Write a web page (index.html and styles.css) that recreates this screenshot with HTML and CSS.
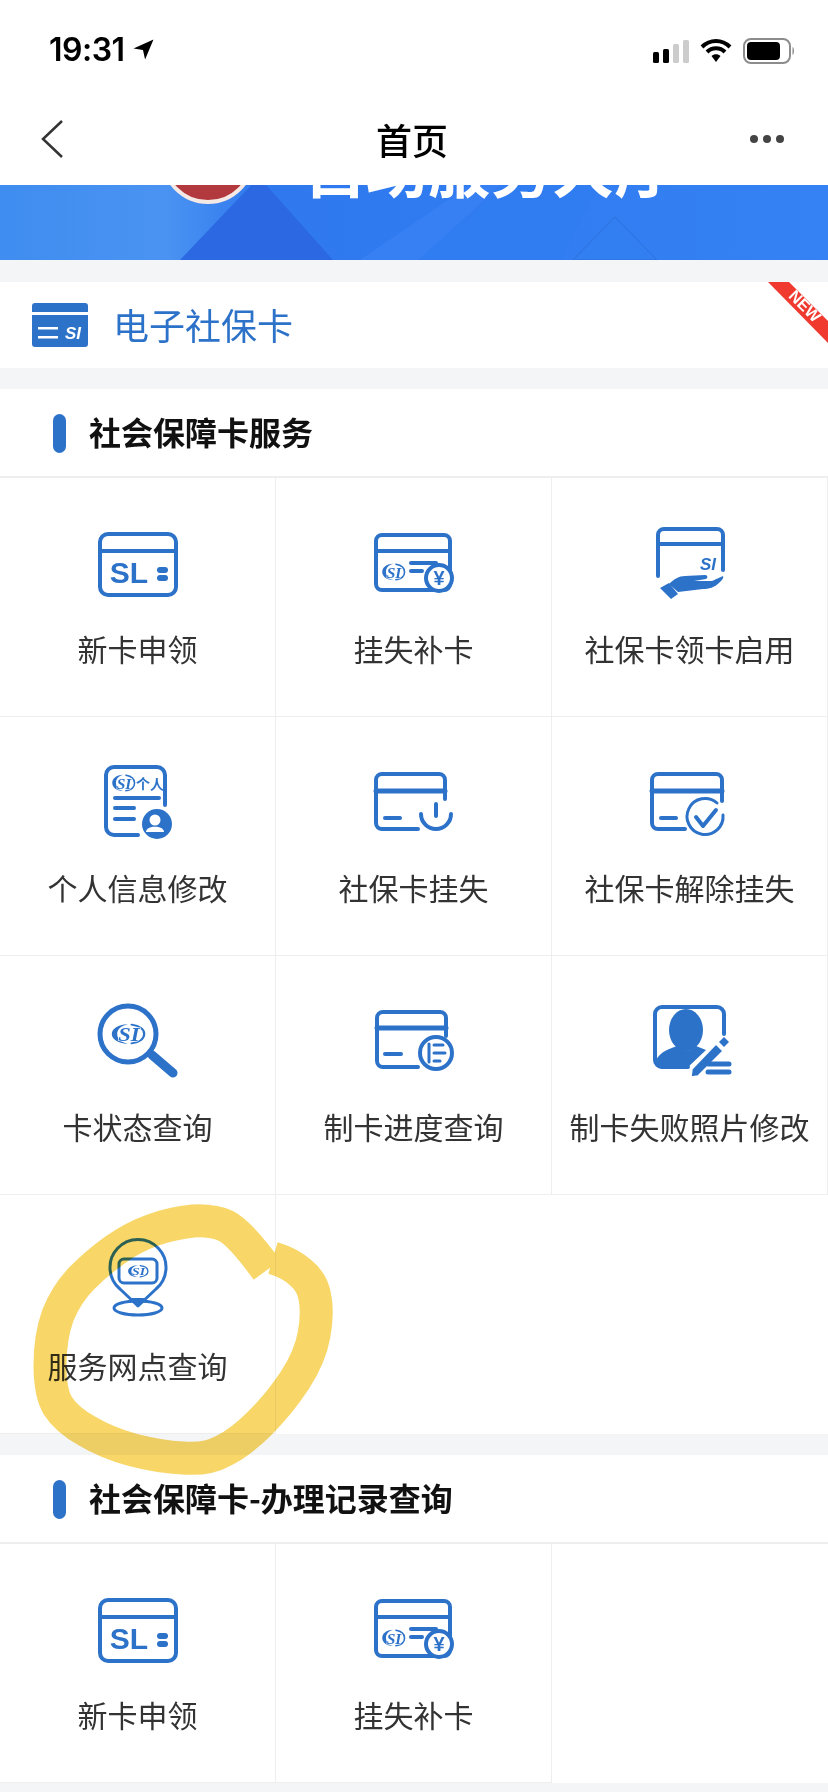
FILE: index.html
```html
<!DOCTYPE html>
<html lang="zh-CN">
<head>
  <meta charset="UTF-8" />
  <title>首页</title>
  <link rel="stylesheet" href="styles.css">
</head>
<body>

<header class="top">
  <div class="status-bar">
    <div class="status-time">
      <span>19:31</span>
      <svg class="loc-arrow" width="21" height="21" viewBox="0 0 20 20"><path d="M19.5 .5 L.5 9 L9.5 10.500 L11.5 19.5 Z"/></svg>
    </div>
    <div class="status-icons">
      <svg width="36" height="23" viewBox="0 0 36 23">
        <rect x="0" y="12" width="6" height="11" rx="1.5" fill="#000"/>
        <rect x="10" y="9" width="6" height="14" rx="1.5" fill="#000"/>
        <rect x="20" y="4" width="6" height="19" rx="1.5" fill="#ccc"/>
        <rect x="30" y="0" width="6" height="23" rx="1.5" fill="#ccc"/>
      </svg>
      <svg width="32" height="24" viewBox="0 0 32 24">
        <path d="M2 8 C10 0 22 0 30 8" fill="none" stroke="#000" stroke-width="4"/>
        <path d="M7 13 C12 8 20 8 25 13" fill="none" stroke="#000" stroke-width="4"/>
        <path d="M11.5 17 C14 14.5 18 14.5 20.500 17 L16 23 Z" fill="#000"/>
      </svg>
      <svg width="52" height="26" viewBox="0 0 52 26">
        <rect x="1" y="1" width="46" height="24" rx="7" fill="#fff" stroke="#8c8c8c" stroke-width="2"/>
        <rect x="4" y="4" width="33" height="18" rx="4" fill="#000"/>
        <path d="M49.500 9 C51.500 10 51.500 16 49.500 17 Z" fill="#8c8c8c"/>
      </svg>
    </div>
  </div>
  <nav class="nav-bar">
    <svg class="nav-back" width="24" height="38" viewBox="0 0 24 38"><path d="M22 1 L3 19 L22 37"/></svg>
    <h1 class="nav-title">首页</h1>
    <div class="nav-more"><i></i><i></i><i></i></div>
  </nav>
</header>

<svg class="banner" viewBox="0 0 828 75" preserveAspectRatio="none">
  <defs>
    <linearGradient id="bannerBg" x1="0" y1="0" x2="1" y2="0">
      <stop offset="0" stop-color="#3f8df0"/>
      <stop offset=".2" stop-color="#4a93f2"/>
      <stop offset=".32" stop-color="#2f78ee"/>
      <stop offset="1" stop-color="#3482f4"/>
    </linearGradient>
  </defs>
  <rect width="828" height="75" fill="url(#bannerBg)"/>
  <path d="M259 -8 L333 75 L180 75 Z" fill="#2b68e2"/>
  <path d="M470 0 L360 75 L420 75 L500 0 Z" fill="#3680f3"/>
  <path d="M505 0 L418 75 L560 75 L600 0 Z" fill="#307cf1"/>
  <path d="M615 32 L657 75 L573 75 Z" fill="#327ff2" stroke="#2d70dc"/>
  <circle cx="208" cy="-28" r="45" fill="#b23a3e" stroke="#f4e9e4" stroke-width="4"/>
  <text x="304" y="8" class="banner-text">自助服务大厅</text>
</svg>

<section class="ecard">
  <svg class="ecard-icon" width="56" height="44" viewBox="0 0 56 44">
    <path d="M3 0 H53 A3 3 0 0 1 56 3 V9 H0 V3 A3 3 0 0 1 3 0 Z" fill="#2d72c9"/>
    <path d="M0 12 H56 V41 A3 3 0 0 1 53 44 H3 A3 3 0 0 1 0 41 Z" fill="#2d72c9"/>
    <rect x="6" y="24" width="20" height="2.500" fill="#fff"/>
    <rect x="6" y="33" width="20" height="2.500" fill="#fff"/>
    <text x="41" y="36" text-anchor="middle" class="ecard-si">SI</text>
  </svg>
  <span class="ecard-name">电子社保卡</span>
  <svg class="new-ribbon" width="60" height="62" viewBox="0 0 60 62">
    <path d="M0 0 H21 L60 39 V61 Z" fill="#f03a30"/>
    <text x="33" y="28" text-anchor="middle" transform="rotate(45 33 28)" class="new-text">NEW</text>
  </svg>
</section>

<section class="panel">
  <h2 class="panel-head">社会保障卡服务</h2>
  <div class="service-grid">
    <a class="service">
      <svg class="icon" viewBox="0 0 96 96">
        <rect x="10" y="18" width="76" height="61" rx="8"/>
        <line x1="10" y1="35" x2="86" y2="35"/>
        <text x="39" y="67" text-anchor="middle" class="sl-mark">SL</text>
        <line x1="70" y1="54" x2="75" y2="54" class="dot"/>
        <line x1="70" y1="62" x2="75" y2="62" class="dot"/>
      </svg>
      <span>新卡申领</span>
    </a>
    <a class="service">
      <svg class="icon" viewBox="0 0 96 96">
        <rect x="10" y="19" width="74" height="55" rx="6"/>
        <line x1="10" y1="35" x2="84" y2="35"/>
        <g transform="translate(15 46) scale(.62)">
          <path class="solid" d="M20 3 C8 3 2 10 2 16 C2 22 8 29 20 29 C12 27 8 22 8 16 C8 10 12 5 20 3 Z"/>
          <path class="arc" d="M24 3.500 C33 5 38 10 38 16 C38 22 33 27 24 28.500"/>
          <text x="21" y="25" text-anchor="middle" class="si-mark">SI</text>
        </g>
        <line x1="45" y1="47" x2="70" y2="47"/>
        <line x1="45" y1="55" x2="56" y2="55"/>
        <circle cx="73" cy="62" r="13" class="cover"/>
        <text x="73" y="69" text-anchor="middle" class="yen">¥</text>
      </svg>
      <span>挂失补卡</span>
    </a>
    <a class="service">
      <svg class="icon" viewBox="0 0 96 96">
        <path d="M16 60 V19 A6 6 0 0 1 22 13 H75 A6 6 0 0 1 81 19 V54"/>
        <line x1="16" y1="28" x2="81" y2="28"/>
        <text x="66" y="54" text-anchor="middle" class="si-text">SI</text>
        <path class="solid" d="M27 68 C32 63 37 60 43 60 L63 59 C66 59 66 62 64 63 L52 65 L70 65 L81 60 C82 62 80 64 78 66 C72 72 67 73 61 73 L36 76 Z"/>
        <path class="solid" d="M18 72 L27 67 L36 78 L29 83 Z"/>
      </svg>
      <span>社保卡领卡启用</span>
    </a>

    <a class="service">
      <svg class="icon" viewBox="0 0 96 96">
        <path d="M48 80 H24 A8 8 0 0 1 16 72 V20 A8 8 0 0 1 24 12 H67 A8 8 0 0 1 75 20 V50"/>
        <g transform="translate(21 18) scale(.62)">
          <path class="solid" d="M20 3 C8 3 2 10 2 16 C2 22 8 29 20 29 C12 27 8 22 8 16 C8 10 12 5 20 3 Z"/>
          <path class="arc" d="M24 3.500 C33 5 38 10 38 16 C38 22 33 27 24 28.500"/>
          <text x="21" y="25" text-anchor="middle" class="si-mark">SI</text>
        </g>
        <text x="60" y="34" text-anchor="middle" class="mini-cn">个人</text>
        <line x1="25" y1="43" x2="69" y2="43"/>
        <line x1="25" y1="53" x2="44" y2="53"/>
        <line x1="25" y1="64" x2="44" y2="64"/>
        <circle cx="67" cy="69" r="15" class="solid"/>
        <circle cx="65" cy="65" r="5.500" class="knock"/>
        <path d="M56 77 C56 70 74 70 74 77 Z" class="knock"/>
      </svg>
      <span>个人信息修改</span>
    </a>
    <a class="service">
      <svg class="icon" viewBox="0 0 96 96">
        <path d="M52 74 H16 A6 6 0 0 1 10 68 V25 A6 6 0 0 1 16 19 H73 A6 6 0 0 1 79 25 V44"/>
        <line x1="10" y1="36" x2="79" y2="36" class="thick"/>
        <line x1="19" y1="63" x2="34" y2="63"/>
        <path d="M55 59 A15 15 0 0 0 85 59"/>
        <line x1="70" y1="49" x2="70" y2="61"/>
      </svg>
      <span>社保卡挂失</span>
    </a>
    <a class="service">
      <svg class="icon" viewBox="0 0 96 96">
        <path d="M43 74 H16 A6 6 0 0 1 10 68 V25 A6 6 0 0 1 16 19 H74 A6 6 0 0 1 80 25 V46"/>
        <line x1="10" y1="36" x2="80" y2="36" class="thick"/>
        <line x1="19" y1="63" x2="34" y2="63"/>
        <path d="M75 48 A18 18 0 1 0 81 60" class="thin"/>
        <path d="M54 62 L61 71 L74 55"/>
      </svg>
      <span>社保卡解除挂失</span>
    </a>

    <a class="service">
      <svg class="icon" viewBox="0 0 96 96">
        <circle cx="38" cy="40" r="28" class="ring"/>
        <line x1="62" y1="61" x2="83" y2="79" class="handle"/>
        <g transform="translate(20 28) scale(.9 .75)">
          <path class="solid" d="M20 3 C8 3 2 10 2 16 C2 22 8 29 20 29 C12 27 8 22 8 16 C8 10 12 5 20 3 Z"/>
          <path class="arc" d="M24 3.500 C33 5 38 10 38 16 C38 22 33 27 24 28.500"/>
          <text x="21" y="25" text-anchor="middle" class="si-mark">SI</text>
        </g>
      </svg>
      <span>卡状态查询</span>
    </a>
    <a class="service">
      <svg class="icon" viewBox="0 0 96 96">
        <path d="M52 73 H17 A6 6 0 0 1 11 67 V24 A6 6 0 0 1 17 18 H74 A6 6 0 0 1 80 24 V42"/>
        <line x1="11" y1="34" x2="80" y2="34" class="thick"/>
        <line x1="19" y1="60" x2="35" y2="60"/>
        <circle cx="70" cy="59" r="16"/>
        <line x1="63" y1="50" x2="63" y2="68" class="thin"/>
        <line x1="68" y1="51" x2="77" y2="51" class="thin"/>
        <line x1="68" y1="59" x2="79" y2="59" class="thin"/>
        <line x1="68" y1="67" x2="74" y2="67" class="thin"/>
      </svg>
      <span>制卡进度查询</span>
    </a>
    <a class="service">
      <svg class="icon" viewBox="0 0 96 96">
        <path d="M46 73 H20 A7 7 0 0 1 13 66 V20 A7 7 0 0 1 20 13 H75 A7 7 0 0 1 82 20 V40"/>
        <ellipse cx="44" cy="36" rx="17" ry="21" class="solid"/>
        <path class="solid" d="M14 72 V66 C18 58 28 54 36 52 C42 58 48 58 54 52 L64 56 L44 75 H20 Z"/>
        <path class="pencil" d="M74 50 L81 57 L56 82 L49 83 L50 75 Z"/>
        <path class="solid" d="M82 43 L87 48 L82 53 L77 48 Z"/>
        <line x1="66" y1="70" x2="87" y2="70" class="thick"/>
        <line x1="66" y1="78" x2="87" y2="78" class="thick"/>
      </svg>
      <span>制卡失败照片修改</span>
    </a>

    <a class="service">
      <svg class="icon" viewBox="0 0 96 96">
        <path d="M48 73 L30 56 A28 28 0 1 1 66 56 Z" class="thin"/>
        <ellipse cx="48" cy="75" rx="24" ry="7" class="thin"/>
        <path d="M48 72 L41 65 H55 Z" class="solid"/>
        <rect x="29" y="26" width="38" height="24" rx="5" class="thin"/>
        <g transform="translate(37 31) scale(.55 .45)">
          <path class="solid" d="M20 3 C8 3 2 10 2 16 C2 22 8 29 20 29 C12 27 8 22 8 16 C8 10 12 5 20 3 Z"/>
          <path class="arc" d="M24 3.500 C33 5 38 10 38 16 C38 22 33 27 24 28.500"/>
          <text x="21" y="25" text-anchor="middle" class="si-mark">SI</text>
        </g>
      </svg>
      <span>服务网点查询</span>
    </a>
  </div>
</section>

<section class="panel">
  <h2 class="panel-head">社会保障卡-办理记录查询</h2>
  <div class="service-grid">
    <a class="service">
      <svg class="icon" viewBox="0 0 96 96">
        <rect x="10" y="18" width="76" height="61" rx="8"/>
        <line x1="10" y1="35" x2="86" y2="35"/>
        <text x="39" y="67" text-anchor="middle" class="sl-mark">SL</text>
        <line x1="70" y1="54" x2="75" y2="54" class="dot"/>
        <line x1="70" y1="62" x2="75" y2="62" class="dot"/>
      </svg>
      <span>新卡申领</span>
    </a>
    <a class="service">
      <svg class="icon" viewBox="0 0 96 96">
        <rect x="10" y="19" width="74" height="55" rx="6"/>
        <line x1="10" y1="35" x2="84" y2="35"/>
        <g transform="translate(15 46) scale(.62)">
          <path class="solid" d="M20 3 C8 3 2 10 2 16 C2 22 8 29 20 29 C12 27 8 22 8 16 C8 10 12 5 20 3 Z"/>
          <path class="arc" d="M24 3.500 C33 5 38 10 38 16 C38 22 33 27 24 28.500"/>
          <text x="21" y="25" text-anchor="middle" class="si-mark">SI</text>
        </g>
        <line x1="45" y1="47" x2="70" y2="47"/>
        <line x1="45" y1="55" x2="56" y2="55"/>
        <circle cx="73" cy="62" r="13" class="cover"/>
        <text x="73" y="69" text-anchor="middle" class="yen">¥</text>
      </svg>
      <span>挂失补卡</span>
    </a>
  </div>
</section>

<!-- marker scribble drawn on the screenshot -->
<svg class="scribble" width="828" height="1792" viewBox="0 0 828 1792">
  <path d="M267 1270 Q240 1233 226 1226 Q213 1220 193 1221 Q173 1223 153 1230 Q133 1237 115 1250 Q97 1263 82 1278 Q67 1293 58 1315 Q50 1337 50 1365 Q50 1393 58 1406 Q67 1420 87 1431 Q107 1443 133 1450 Q160 1457 183 1458 Q207 1460 223 1451 Q240 1443 260 1423 Q280 1403 295 1380 Q310 1357 314 1335 Q318 1313 315 1298 Q313 1283 301 1273 Q290 1263 273 1258"/>
</svg>

</body>
</html>
```

FILE: styles.css
```css
* { box-sizing: border-box; }

html, body {
  margin: 0;
  padding: 0;
}

body {
  position: relative;
  width: 828px;
  height: 1792px;
  overflow: hidden;
  background: #f4f5f6;
  font-family: "Noto Sans CJK SC", "Noto Sans", sans-serif;
  color: #333;
}

.top { background: #fff; }

.status-bar {
  height: 98px;
  padding: 0 33px 0 49px;
  display: flex;
  align-items: center;
  justify-content: space-between;
}

.status-time {
  display: flex;
  align-items: center;
  gap: 8px;
  font-family: Inter, sans-serif;
  font-size: 32px;
  font-weight: 600;
  letter-spacing: -.5px;
  color: #000;
}

.loc-arrow { fill: #000; }

.status-icons {
  padding-top: 4px;
  display: flex;
  align-items: center;
  gap: 11px;
}

.nav-bar {
  height: 87px;
  padding: 0 44px 5px 40px;
  display: grid;
  grid-template-columns: 1fr auto 1fr;
  align-items: center;
}

.nav-back {
  fill: none;
  stroke: #333;
  stroke-width: 2.5;
}

.nav-title {
  margin: 0;
  font-size: 36px;
  font-weight: 500;
  color: #000;
}

.nav-more {
  justify-self: end;
  display: flex;
  gap: 5px;
}

.nav-more i {
  width: 8px;
  height: 8px;
  border-radius: 50%;
  background: #444;
}

.banner {
  display: block;
  width: 828px;
  height: 75px;
}

.banner-text {
  font-size: 62px;
  font-weight: 700;
  fill: #fff;
}

.ecard {
  position: relative;
  height: 86px;
  margin-top: 22px;
  padding: 0 0 3px 32px;
  display: flex;
  align-items: center;
  gap: 25px;
  background: #fff;
}

.ecard-icon { margin-top: 3px; }

.ecard-si {
  font-family: "Liberation Sans", sans-serif;
  font-size: 17px;
  font-weight: 700;
  font-style: italic;
  fill: #fff;
}

.ecard-name {
  font-size: 36px;
  color: #2d72c9;
}

.new-ribbon {
  position: absolute;
  top: 0;
  right: 0;
}

.new-text {
  font-family: "Liberation Sans", sans-serif;
  font-size: 16px;
  font-weight: 700;
  fill: #fff;
}

.panel {
  margin-top: 21px;
  background: #fff;
}

.panel-head {
  position: relative;
  height: 89px;
  margin: 0;
  padding: 0 0 4px 89px;
  display: flex;
  align-items: center;
  font-size: 32px;
  font-weight: 700;
  color: #111;
  border-bottom: 2px solid #eee;
}

.panel-head::before {
  content: "";
  position: absolute;
  left: 53px;
  top: 25px;
  width: 13px;
  height: 39px;
  border-radius: 7px;
  background: #2d72c9;
}

.service-grid {
  display: grid;
  grid-template-columns: repeat(3, 276px);
  grid-auto-rows: 239px;
}

.service {
  padding-top: 38px;
  display: flex;
  flex-direction: column;
  align-items: center;
  border-right: 1px solid #eee;
  border-bottom: 1px solid #eee;
  font-size: 30px;
  line-height: 40px;
  white-space: nowrap;
}

.service span { margin-top: 16px; }

.icon {
  display: block;
  width: 96px;
  height: 96px;
  fill: none;
  stroke: #2d72c9;
  stroke-width: 4;
  stroke-linecap: round;
  stroke-linejoin: round;
  flex-shrink: 0;
}

.icon .thick { stroke-width: 5; }
.icon .thin { stroke-width: 3; }
.icon .ring { stroke-width: 5; }
.icon .handle { stroke-width: 9; }
.icon .dot { stroke-width: 6; }
.icon .arc { stroke-width: 2.5; }

.icon .solid {
  fill: #2d72c9;
  stroke: none;
}

.icon .knock {
  fill: #fff;
  stroke: none;
}

.icon .pencil {
  fill: #2d72c9;
  stroke: #fff;
  stroke-width: 1.5;
}

.icon .cover { fill: #fff; }

.si-mark,
.sl-mark,
.si-text,
.yen,
.mini-cn {
  fill: #2d72c9;
  stroke: none;
}

.si-mark {
  font-family: "Liberation Serif", serif;
  font-size: 25px;
  font-weight: 700;
  font-style: italic;
  paint-order: stroke;
  stroke: #fff;
  stroke-width: 1.5;
}

.sl-mark {
  font-family: "Liberation Sans", sans-serif;
  font-size: 30px;
  font-weight: 700;
}

.si-text {
  font-family: "Liberation Sans", sans-serif;
  font-size: 17px;
  font-weight: 700;
  font-style: italic;
}

.yen {
  font-family: "Liberation Sans", sans-serif;
  font-size: 20px;
  font-weight: 700;
}

.mini-cn {
  font-size: 14px;
  font-weight: 700;
}

.scribble {
  position: absolute;
  top: 0;
  left: 0;
  pointer-events: none;
  mix-blend-mode: multiply;
  fill: none;
  stroke: #f8d768;
  stroke-width: 33;
  stroke-linecap: butt;
  stroke-linejoin: round;
}
```
